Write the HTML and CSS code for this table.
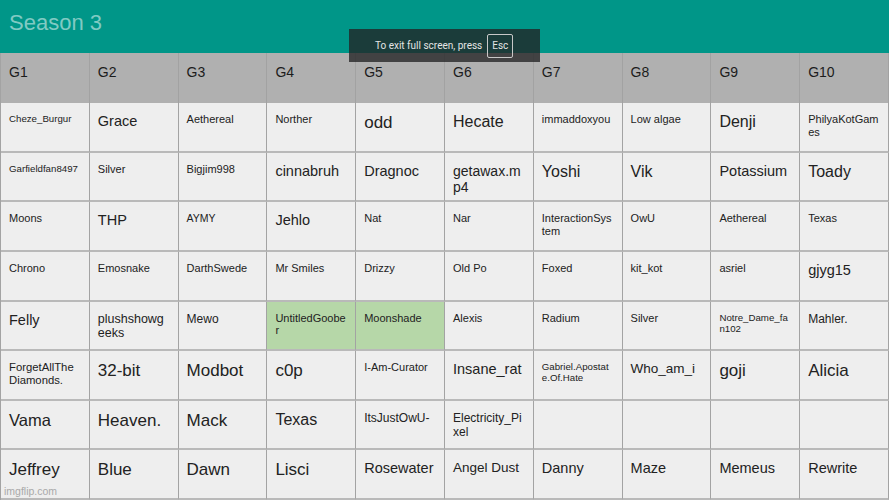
FILE: index.html
```html
<!DOCTYPE html>
<html lang="en">
<head>
    <meta charset="UTF-8">
    <meta name="viewport" content="width=device-width, initial-scale=1.0">
    <link rel="stylesheet" href="styles.css">
    <title>Season 3</title>
</head>
<body>
    <div class="page">
        <header class="topbar">
            <h1 class="title">Season 3</h1>
        </header>

        <!-- Groups board -->
        <div class="board">
            <div class="head">G1</div>
            <div class="head">G2</div>
            <div class="head">G3</div>
            <div class="head">G4</div>
            <div class="head">G5</div>
            <div class="head">G6</div>
            <div class="head">G7</div>
            <div class="head">G8</div>
            <div class="head">G9</div>
            <div class="head">G10</div>

            <div class="cell t10">Cheze_Burgur</div>
            <div class="cell t14h">Grace</div>
            <div class="cell t11">Aethereal</div>
            <div class="cell t11">Norther</div>
            <div class="cell t17">odd</div>
            <div class="cell t16">Hecate</div>
            <div class="cell t11">immaddoxyou</div>
            <div class="cell t11">Low algae</div>
            <div class="cell t16">Denji</div>
            <div class="cell t11">PhilyaKotGames</div>

            <div class="cell t10">Garfieldfan8497</div>
            <div class="cell t11">Silver</div>
            <div class="cell t11">Bigjim998</div>
            <div class="cell t14h">cinnabruh</div>
            <div class="cell t14h">Dragnoc</div>
            <div class="cell t14">getawax.mp4</div>
            <div class="cell t16">Yoshi</div>
            <div class="cell t16">Vik</div>
            <div class="cell t14h">Potassium</div>
            <div class="cell t16">Toady</div>

            <div class="cell t11">Moons</div>
            <div class="cell t14h">THP</div>
            <div class="cell t10h">AYMY</div>
            <div class="cell t14h">Jehlo</div>
            <div class="cell t11">Nat</div>
            <div class="cell t11">Nar</div>
            <div class="cell t11">InteractionSystem</div>
            <div class="cell t11">OwU</div>
            <div class="cell t11">Aethereal</div>
            <div class="cell t11">Texas</div>

            <div class="cell t11">Chrono</div>
            <div class="cell t11">Emosnake</div>
            <div class="cell t11">DarthSwede</div>
            <div class="cell t11">Mr Smiles</div>
            <div class="cell t11">Drizzy</div>
            <div class="cell t11">Old Po</div>
            <div class="cell t11">Foxed</div>
            <div class="cell t11">kit_kot</div>
            <div class="cell t11">asriel</div>
            <div class="cell t14h">gjyg15</div>

            <div class="cell t14h">Felly</div>
            <div class="cell t12h">plushshowgeeks</div>
            <div class="cell t12">Mewo</div>
            <div class="cell t11 picked">UntitledGoober</div>
            <div class="cell t11 picked">Moonshade</div>
            <div class="cell t11">Alexis</div>
            <div class="cell t11">Radium</div>
            <div class="cell t11">Silver</div>
            <div class="cell t10">Notre_Dame_fan102</div>
            <div class="cell t12">Mahler.</div>

            <div class="cell t11w">ForgetAllTheDiamonds.</div>
            <div class="cell t17">32-bit</div>
            <div class="cell t17">Modbot</div>
            <div class="cell t17">c0p</div>
            <div class="cell t11">I-Am-Curator</div>
            <div class="cell t14h">Insane_rat</div>
            <div class="cell t10">Gabriel.Apostate.Of.Hate</div>
            <div class="cell t13h">Who_am_i</div>
            <div class="cell t17">goji</div>
            <div class="cell t17">Alicia</div>

            <div class="cell t16h">Vama</div>
            <div class="cell t17">Heaven.</div>
            <div class="cell t17">Mack</div>
            <div class="cell t16">Texas</div>
            <div class="cell t12">ItsJustOwU-</div>
            <div class="cell t12">Electricity_Pixel</div>
            <div class="cell"></div>
            <div class="cell"></div>
            <div class="cell"></div>
            <div class="cell"></div>

            <div class="cell t17">Jeffrey</div>
            <div class="cell t17">Blue</div>
            <div class="cell t17">Dawn</div>
            <div class="cell t17">Lisci</div>
            <div class="cell t14h">Rosewater</div>
            <div class="cell t13h">Angel Dust</div>
            <div class="cell t14h">Danny</div>
            <div class="cell t14h">Maze</div>
            <div class="cell t14h">Memeus</div>
            <div class="cell t14h">Rewrite</div>
        </div>

        <!-- browser fullscreen hint over the page -->
        <div class="fs-hint">
            <span>To exit full screen, press</span>
            <span class="key">Esc</span>
        </div>

        <div class="watermark">imgflip.com</div>
    </div>
</body>
</html>
```

FILE: styles.css
```css
* {
    box-sizing: border-box;
}
body {
    margin: 0;
    background: #eeeeee;
    font-family: 'Liberation Sans', Arial, sans-serif;
    overflow: hidden;
}
.page {
    position: relative;
    width: 889px;
    height: 500px;
    display: flex;
    flex-direction: column;
}
.topbar {
    height: 53px;
    flex: none;
    background: #009688;
    padding: 10px 9px 0 9px;
}
.title {
    margin: 0;
    font-size: 22px;
    font-weight: normal;
    line-height: 1.15;
    color: #80cac3;
}
.board {
    flex: 1;
    display: grid;
    grid-template-columns: repeat(10, 1fr);
    grid-template-rows: 50px repeat(8, 1fr);
    border-left: 1px solid #a3a3a3;
}
.head {
    background: #b0b0b0;
    border-right: 1px solid #a2a2a2;
    padding: 11px 8px 0 8px;
    font-size: 14px;
    color: #1c1c1c;
}
.cell {
    background: #eeeeee;
    border-right: 1px solid #a3a3a3;
    border-bottom: 2px solid #b9b9b9;
    padding: 10px 8px 0 8px;
    line-height: 1.17;
    color: #222;
    word-break: break-all;
}
.cell.picked {
    background: #b6d7a8;
}
.t10 { font-size: 9.7px; }
.t10h { font-size: 10.5px; }
.t11 { font-size: 11px; }
.t11w { font-size: 11.3px; }
.t12 { font-size: 12px; }
.t12h { font-size: 12.5px; }
.t13h { font-size: 13.5px; }
.t14 { font-size: 14px; }
.t14h { font-size: 14.5px; }
.t16 { font-size: 16px; }
.t16h { font-size: 16.5px; }
.t17 { font-size: 17px; }

.fs-hint {
    position: absolute;
    top: 29px;
    left: 349px;
    width: 191px;
    height: 33px;
    background: rgba(34, 34, 36, 0.78);
    color: #e4e4e4;
    font-family: Roboto, sans-serif;
    font-size: 10px;
    display: flex;
    align-items: center;
    gap: 5px;
    padding-left: 26px;
}
.fs-hint .key {
    border: 1px solid #c8c8c8;
    border-radius: 2px;
    padding: 6px 4px;
    line-height: 1;
}
.watermark {
    position: absolute;
    left: 4px;
    bottom: 3px;
    font-size: 10.5px;
    color: #a9a9a9;
}
```
